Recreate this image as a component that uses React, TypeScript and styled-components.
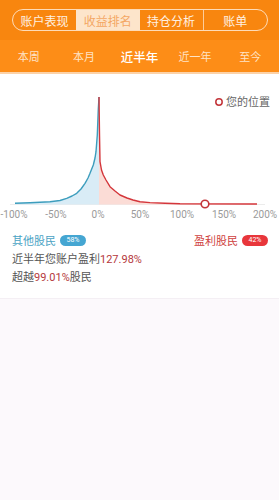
import React from "react";
import styled, { createGlobalStyle } from "styled-components";

const Global = createGlobalStyle`
  html, body { margin: 0; padding: 0; background: #fcf9fc; }
  body { font-family: "Noto Sans CJK SC", "Noto Sans", Roboto, sans-serif; }
`;

const Page = styled.div`
  width: 279px;
  min-height: 500px;
  background: #fcf9fc;
`;

const TopBar = styled.div`
  background: #f8860f;
  padding: 9px 11px 9px 12px;
`;

const Segments = styled.div`
  display: flex;
  height: 22px;
  box-sizing: border-box;
  border: 1px solid rgba(255, 240, 225, 0.8);
  border-radius: 11px;
  overflow: hidden;
`;

const Segment = styled.div<{ $active?: boolean; $divider?: boolean }>`
  flex: 1;
  display: flex;
  align-items: center;
  justify-content: center;
  font-size: 12px;
  color: ${(p) => (p.$active ? "#f4a763" : "#fff1e3")};
  background: ${(p) => (p.$active ? "#fde5cb" : "transparent")};
  border-left: ${(p) => (p.$divider ? "1px solid rgba(255,235,215,0.7)" : "none")};
`;

const Periods = styled.div`
  display: flex;
  height: 32px;
  align-items: center;
  background: #fd8d17;
  border-bottom: 2px solid #fcd2a8;
  padding: 0 1px;
`;

const Period = styled.div<{ $active?: boolean }>`
  flex: 1;
  text-align: center;
  font-size: ${(p) => (p.$active ? "12.5px" : "11px")};
  font-weight: ${(p) => (p.$active ? 500 : 400)};
  color: ${(p) => (p.$active ? "#ffffff" : "#ffe3c6")};
`;

const Card = styled.div`
  background: #ffffff;
  padding-bottom: 12px;
  border-bottom: 1px solid #f4eff4;
`;

const Chart = styled.svg`
  display: block;
  width: 279px;
  height: 146px;
`;

const Info = styled.div`
  padding: 12px 11px 0 12px;
  font-size: 11px;
  line-height: 16px;
  color: #555555;
`;

const LegendRow = styled.div`
  display: flex;
  justify-content: space-between;
  align-items: center;
  margin-bottom: 2px;
`;

const Group = styled.div<{ $color: string }>`
  display: flex;
  align-items: center;
  gap: 4px;
  color: ${(p) => p.$color};
`;

const Badge = styled.span<{ $bg: string }>`
  display: inline-flex;
  align-items: center;
  justify-content: center;
  width: 26px;
  height: 11px;
  border-radius: 6px;
  background: ${(p) => p.$bg};
  color: #fff;
  font-family: Roboto, "Noto Sans", sans-serif;
  font-size: 7px;
  line-height: 11px;
`;

const Line = styled.div`
  white-space: nowrap;
`;

const Num = styled.span`
  color: #b5383c;
  font-family: Roboto, "Noto Sans", sans-serif;
`;

const blue: [number, number][] = [
  [15, 129.3], [30, 128.8], [50, 127.7], [60, 126.5], [66.7, 124.3], [72, 122],
  [76.7, 119.3], [81, 115], [85, 109.3], [88, 104], [90, 99.3], [93.3, 91],
  [95, 84], [96, 77.7], [97.3, 61], [98.3, 35], [99, 23],
];
const red: [number, number][] = [
  [99, 23], [99.5, 60], [100, 87.7], [101.5, 96], [103.3, 101], [106, 106],
  [110, 112.7], [115, 117], [120, 121], [127, 124], [133, 126], [140, 127.7],
  [150, 128.6], [165, 129.3], [180, 129.7], [257, 130],
];
const pts = (a: [number, number][]) => a.map(([x, y]) => `${x},${y}`).join(" ");

const axis = [
  ["-100%", 14], ["-50%", 56], ["0%", 98], ["50%", 140],
  ["100%", 182], ["150%", 224], ["200%", 265],
] as const;

const tabs = ["账户表现", "收益排名", "持仓分析", "账单"];
const periods = ["本周", "本月", "近半年", "近一年", "至今"];

export default function App() {
  return (
    <Page>
      <Global />
      <TopBar>
        <Segments>
          {tabs.map((t, i) => (
            <Segment key={t} $active={i === 1} $divider={i === 3}>
              {t}
            </Segment>
          ))}
        </Segments>
      </TopBar>
      <Periods>
        {periods.map((p, i) => (
          <Period key={p} $active={i === 2}>
            {p}
          </Period>
        ))}
      </Periods>
      <Card>
        <Chart viewBox="0 0 279 146">
          <line x1="10" y1="130.5" x2="265" y2="130.5" stroke="#ececec" strokeWidth="1" />
          <polygon points={`15,130.5 ${pts(blue)} 99,130.5`} fill="#d9ecf6" />
          <polygon points={`99,130.5 ${pts(red)} 257,130.5`} fill="#fbdcd6" />
          <polyline points={pts(blue)} fill="none" stroke="#3c9dbd" strokeWidth="1.4" strokeLinejoin="round" />
          <polyline points={pts(red)} fill="none" stroke="#d4363b" strokeWidth="1.4" strokeLinejoin="round" />
          <circle cx="205" cy="130" r="3.8" fill="#fff" stroke="#c3353a" strokeWidth="1.6" />
          <circle cx="219" cy="28" r="3.2" fill="#fff" stroke="#c3353a" strokeWidth="1.5" />
          <text x="226" y="32" fontSize="11" fill="#666" fontFamily="Noto Sans CJK SC, sans-serif">您的位置</text>
          {axis.map(([l, x]) => (
            <text key={l} x={x} y="144" fontSize="10" fill="#9a9a9a" textAnchor="middle" fontFamily="Roboto, sans-serif">
              {l}
            </text>
          ))}
        </Chart>
        <Info>
          <LegendRow>
            <Group $color="#4aa3c4">
              其他股民<Badge $bg="#45a6d2">58%</Badge>
            </Group>
            <Group $color="#cf3f40">
              盈利股民<Badge $bg="#e8363b">42%</Badge>
            </Group>
          </LegendRow>
          <Line>
            近半年您账户盈利<Num>127.98%</Num>
          </Line>
          <Line>
            超越<Num>99.01%</Num>股民
          </Line>
        </Info>
      </Card>
    </Page>
  );
}
